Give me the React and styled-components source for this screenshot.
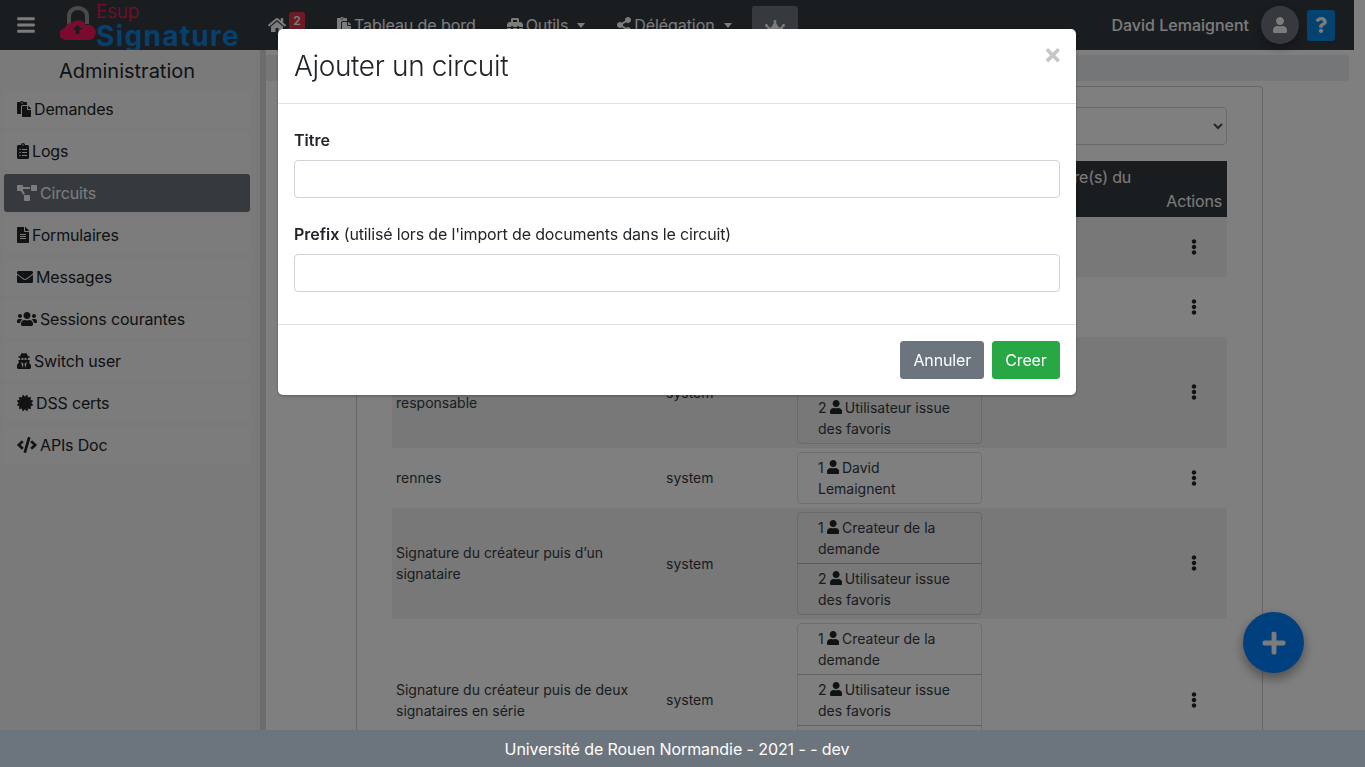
import styled, { createGlobalStyle } from "styled-components";
import {
  FaBars,
  FaCertificate,
  FaClipboardList,
  FaCode,
  FaCrown,
  FaEllipsisV,
  FaEnvelope,
  FaFileAlt,
  FaHome,
  FaPaste,
  FaPlus,
  FaProjectDiagram,
  FaQuestion,
  FaShareAlt,
  FaToolbox,
  FaUser,
  FaUsers,
  FaUserSecret,
} from "react-icons/fa";

const GlobalStyle = createGlobalStyle`
  * {
    box-sizing: border-box;
  }
  html, body {
    margin: 0;
    height: 100%;
    overflow: hidden;
  }
  body {
    font-family: Inter, "Liberation Sans", sans-serif;
    font-size: 16px;
    line-height: 1.5;
    letter-spacing: -0.01em;
    color: #212529;
    background: #fff;
  }
`;

const Page = styled.div`
  height: 100vh;
  display: flex;
  flex-direction: column;
`;

const Shell = styled.div`
  flex: 1 1 0;
  min-height: 0;
  padding-right: 11px;
  display: flex;
  flex-direction: column;
  overflow: hidden;
`;

const Navbar = styled.nav`
  flex: 0 0 50px;
  background: #343a40;
  display: flex;
  align-items: center;
  padding-left: 17px;
  padding-right: 19px;
  color: #f8f9fa;
`;

const MenuIcon = styled(FaBars)`
  width: 18px;
  height: 20px;
  color: #f8f9fa;
  margin-right: 25px;
`;

const Logo = styled.div`
  width: 208px;
  height: 50px;
  display: flex;
  align-items: flex-start;
  flex: none;
`;

const LogoMark = styled.svg`
  width: 36px;
  height: 50px;
  flex: none;
`;

const LogoText = styled.div`
  display: flex;
  flex-direction: column;
  font-size: 19px;
  line-height: 18px;
  padding-top: 3px;
`;

const LogoEsup = styled.span`
  font-weight: 300;
  color: #f4165f;
`;

const LogoName = styled.span`
  margin-top: -1px;
  font-size: 28px;
  line-height: 32px;
  font-weight: 700;
  letter-spacing: 1.3px;
  color: #0f80d8;
`;

const NavLink = styled.div`
  display: flex;
  align-items: center;
  gap: 3px;
  margin-left: ${(p) => p.$ml || 0}px;
  white-space: nowrap;
  letter-spacing: -0.005em;

  svg {
    flex: none;
    width: ${(p) => p.$iconWidth}px;
  }
`;

const HomeBadge = styled.span`
  width: 16px;
  height: 21px;
  margin-top: -5px;
  border-radius: 3px;
  background: #dc3545;
  color: #f8f9fa;
  font-size: 12px;
  font-weight: 600;
  text-align: center;
`;

const Caret = styled.span`
  width: 0;
  height: 0;
  margin-left: 6px;
  border-top: 5px solid #f8f9fa;
  border-left: 4.5px solid transparent;
  border-right: 4.5px solid transparent;
`;

const CrownButton = styled.div`
  width: 46px;
  height: 44px;
  margin-top: 6px;
  margin-left: 20px;
  background: #6c757d;
  border-radius: 3px 3px 0 0;
  display: flex;
  align-items: center;
  justify-content: center;

  svg {
    width: 20px;
    height: 16px;
  }
`;

const UserZone = styled.div`
  margin-left: auto;
  display: flex;
  align-items: center;
`;

const UserName = styled.span`
  font-weight: 500;
  letter-spacing: 0;
  margin-right: 12px;
`;

const Avatar = styled.div`
  width: 38px;
  height: 38px;
  border-radius: 50%;
  background: #6c757d;
  box-shadow: 0 4px 10px rgba(0, 0, 0, 0.3);
  display: flex;
  align-items: center;
  justify-content: center;
  margin-right: 8px;

  svg {
    width: 14px;
    height: 16px;
  }
`;

const HelpButton = styled.div`
  width: 28px;
  height: 31px;
  border-radius: 3px;
  background: #0884de;
  display: flex;
  align-items: center;
  justify-content: center;

  svg {
    width: 12px;
    height: 16px;
  }
`;

const Body = styled.div`
  flex: 1 1 0;
  min-height: 0;
  display: flex;
`;

const Sidebar = styled.aside`
  flex: 0 0 266px;
  background: #f4f5f6;
  border-right: 6px solid #d8d8d8;
  padding: 6px 10px 0 4px;
  display: flex;
  flex-direction: column;
  gap: 4px;
`;

const SidebarTitle = styled.div`
  font-size: 20px;
  line-height: 30px;
  letter-spacing: 0;
  text-align: center;
`;

const SideItem = styled.div`
  height: 38px;
  padding-left: 13px;
  display: flex;
  align-items: center;
  gap: 3px;
  border-radius: 3px;
  background: ${(p) => (p.$active ? "#6c757d" : "#f8f9fa")};
  color: ${(p) => (p.$active ? "#f8f9fa" : "#212529")};

  svg {
    width: ${(p) => p.$iconWidth}px;
  }
`;

const Main = styled.main`
  flex: 1 1 0;
  min-width: 0;
  padding: 5px 5px 0 0;
`;

const Breadcrumb = styled.div`
  height: 26px;
  background: #e9ecef;
  border-radius: 3px;
`;

const Card = styled.section`
  margin: 5px 86px 0 90px;
  padding: 20px 35px 0;
  border: 1px solid rgba(0, 0, 0, 0.2);
  border-radius: 4px;
  background: #fff;
`;

const Filter = styled.select`
  display: block;
  width: 100%;
  height: 38px;
  margin-bottom: 16px;
  background: #fff;
  border: 1px solid #ced4da;
  border-radius: 4px;
  font: inherit;
  color: #495057;
`;

const Table = styled.table`
  width: 835px;
  table-layout: fixed;
  border-collapse: collapse;
`;

const Th = styled.th`
  width: ${(p) => p.$w}px;
  padding: 4px;
  padding-left: ${(p) => p.$indent || 4}px;
  padding-right: ${(p) => (p.$right ? 5 : 4)}px;
  font-weight: 400;
  vertical-align: bottom;
  text-align: ${(p) => (p.$right ? "right" : "left")};
  color: #f8f9fa;
  background: #343a40;
`;

const Row = styled.tr`
  background: ${(p) => (p.$striped ? "rgba(0, 0, 0, 0.06)" : "transparent")};
`;

const Td = styled.td`
  padding: 4px 4px 5px;
  font-size: 14px;
  line-height: 21px;
  letter-spacing: 0;
  color: #343a40;
  vertical-align: middle;
  text-align: ${(p) => (p.$center ? "center" : "left")};
`;

const StepsCell = styled(Td)`
  padding: 4px;
`;

const Steps = styled.ul`
  margin: 0;
  padding: 0;
  list-style: none;
`;

const Step = styled.li`
  padding: 4px 28px 4px 20px;
  border: 1px solid rgba(0, 0, 0, 0.125);
  margin-top: -1px;
  background: transparent;

  &:first-child {
    margin-top: 0;
    border-radius: 4px 4px 0 0;
  }
  &:last-child {
    border-bottom-left-radius: 4px;
    border-bottom-right-radius: 4px;
  }
  &:only-child {
    border-radius: 4px;
  }

  svg {
    width: 12.25px;
    margin: 0 3px;
    vertical-align: -1px;
    color: #212529;
  }
`;

const Dots = styled(FaEllipsisV)`
  font-size: 16px;
  display: block;
  margin: 0 auto;
  color: #212529;
`;

const Fab = styled.div`
  position: fixed;
  left: 1243px;
  top: 612px;
  width: 61px;
  height: 61px;
  border-radius: 50%;
  background: #0080ff;
  color: #f8f9fa;
  box-shadow: 0 5px 12px rgba(0, 0, 0, 0.4);
  display: flex;
  align-items: center;
  justify-content: center;
  font-size: 26px;
`;

const Footer = styled.footer`
  position: relative;
  z-index: 15;
  flex: 0 0 37px;
  min-height: 0;
  overflow: hidden;
  padding-right: 11px;
  background: #6c757d;
  color: #fff;
  text-align: center;
  line-height: 38px;
  letter-spacing: -0.005em;
`;

const Backdrop = styled.div`
  position: fixed;
  inset: 0;
  z-index: 10;
  background: rgba(0, 0, 0, 0.5);
`;

const Modal = styled.div`
  position: fixed;
  z-index: 20;
  top: 29px;
  left: 278px;
  width: 798px;
  background: #fff;
  border-radius: 5px;
  box-shadow: 0 1px 3px rgba(0, 0, 0, 0.3);
`;

const ModalHeader = styled.header`
  height: 75px;
  padding: 16px;
  border-bottom: 1px solid #dee2e6;
  display: flex;
  justify-content: space-between;
`;

const ModalTitle = styled.h5`
  margin: 0;
  font-size: 28px;
  line-height: 42px;
  font-weight: 300;
  letter-spacing: -0.0125em;
`;

const CloseButton = styled.span`
  font-size: 28px;
  line-height: 20px;
  font-weight: 700;
  color: #c6c6c6;
  margin-top: -1px;
  margin-right: -2px;
`;

const ModalBody = styled.div`
  padding: 24px 16px 32px;
  display: flex;
  flex-direction: column;
  gap: 24px;
`;

const Field = styled.div`
  display: flex;
  flex-direction: column;
  gap: 8px;
`;

const Label = styled.label`
  display: block;
`;

const LabelName = styled.span`
  font-weight: 600;
  letter-spacing: 0;
`;

const TextInput = styled.input`
  height: 38px;
  width: 100%;
  padding: 6px 12px;
  border: 1px solid #ced4da;
  border-radius: 4px;
  background: #fff;
  font: inherit;
`;

const ModalFooter = styled.div`
  padding: 16px;
  border-top: 1px solid #dee2e6;
  display: flex;
  justify-content: flex-end;
  gap: 8px;
`;

const Button = styled.button`
  height: 38px;
  min-width: 68px;
  padding: 0 12px;
  border: 1px solid ${(p) => p.$color};
  border-radius: 3px;
  background: ${(p) => p.$color};
  color: #fff;
  font: inherit;
  letter-spacing: inherit;
`;

const sideItems = [
  { icon: <FaPaste />, width: 14, label: "Demandes" },
  { icon: <FaClipboardList />, width: 12, label: "Logs" },
  { icon: <FaProjectDiagram />, width: 20, label: "Circuits", active: true },
  { icon: <FaFileAlt />, width: 12, label: "Formulaires" },
  { icon: <FaEnvelope />, width: 16, label: "Messages" },
  { icon: <FaUsers />, width: 20, label: "Sessions courantes" },
  { icon: <FaUserSecret />, width: 14, label: "Switch user" },
  { icon: <FaCertificate />, width: 16, label: "DSS certs" },
  { icon: <FaCode />, width: 20, label: "APIs Doc" },
];

const creator = "Createur de la demande";
const favorite = "Utilisateur issue des favoris";

const circuits = [
  { title: "Visa", steps: ["David Lemaignent"] },
  { title: "Signature", steps: ["David Lemaignent"] },
  { title: "Visa du créateur puis signature du responsable", steps: [creator, favorite] },
  { title: "rennes", steps: ["David Lemaignent"] },
  { title: "Signature du créateur puis d’un signataire", steps: [creator, favorite] },
  {
    title: "Signature du créateur puis de deux signataires en série",
    steps: [creator, favorite, favorite],
  },
];

const App = () => {
  return (
    <Page>
      <GlobalStyle />
      <Shell>
        <Navbar>
          <MenuIcon />
          <Logo>
            <LogoMark viewBox="0 0 36 50">
              <path
                d="M9 24V16a9 8 0 0 1 18 0v8"
                fill="none"
                stroke="#949494"
                strokeWidth="4"
              />
              <path
                d="M6 40a6 6 0 0 1-1-12 7 7 0 0 1 7-5 8.5 8.5 0 0 1 14 2 7.500 7.500 0 0 1 4 15z"
                fill="#f4165f"
              />
              <path d="M17.500 25l5 4.500h-3V34h-4v-4.500h-3z" fill="#343a40" />
            </LogoMark>
            <LogoText>
              <LogoEsup>Esup</LogoEsup>
              <LogoName>Signature</LogoName>
            </LogoText>
          </Logo>
          <NavLink $iconWidth={18}>
            <FaHome />
            <HomeBadge>2</HomeBadge>
          </NavLink>
          <NavLink $ml={32} $iconWidth={14}>
            <FaPaste />
            Tableau de bord
          </NavLink>
          <NavLink $ml={31} $iconWidth={16}>
            <FaToolbox />
            Outils
            <Caret />
          </NavLink>
          <NavLink $ml={32} $iconWidth={14}>
            <FaShareAlt />
            Délégation
            <Caret />
          </NavLink>
          <CrownButton>
            <FaCrown />
          </CrownButton>
          <UserZone>
            <UserName>David Lemaignent</UserName>
            <Avatar>
              <FaUser />
            </Avatar>
            <HelpButton>
              <FaQuestion />
            </HelpButton>
          </UserZone>
        </Navbar>
        <Body>
          <Sidebar>
            <SidebarTitle>Administration</SidebarTitle>
            {sideItems.map((item) => (
              <SideItem key={item.label} $active={item.active} $iconWidth={item.width}>
                {item.icon}
                {item.label}
              </SideItem>
            ))}
          </Sidebar>
          <Main>
            <Breadcrumb />
            <Card>
              <Filter defaultValue="all">
                <option value="all">Tous les circuits</option>
              </Filter>
              <Table>
                <thead>
                  <tr>
                    <Th $w={270}>Titre</Th>
                    <Th $w={131}>Créateur</Th>
                    <Th $w={193}>Étapes</Th>
                    <Th $w={175} $indent={14}>
                      Destinataire(s) du suivi
                    </Th>
                    <Th $w={66} $right>
                      Actions
                    </Th>
                  </tr>
                </thead>
                <tbody>
                  {circuits.map((circuit, index) => (
                    <Row key={circuit.title} $striped={index % 2 === 0}>
                      <Td>{circuit.title}</Td>
                      <Td>system</Td>
                      <StepsCell>
                        <Steps>
                          {circuit.steps.map((step, stepIndex) => (
                            <Step key={stepIndex}>
                              {stepIndex + 1}
                              <FaUser />
                              {step}
                            </Step>
                          ))}
                        </Steps>
                      </StepsCell>
                      <Td />
                      <Td $center>
                        <Dots />
                      </Td>
                    </Row>
                  ))}
                </tbody>
              </Table>
            </Card>
          </Main>
        </Body>
      </Shell>
      <Fab>
        <FaPlus />
      </Fab>
      <Footer>Université de Rouen Normandie - 2021 - - dev</Footer>
      <Backdrop />
      <Modal>
        <ModalHeader>
          <ModalTitle>Ajouter un circuit</ModalTitle>
          <CloseButton>×</CloseButton>
        </ModalHeader>
        <ModalBody>
          <Field>
            <Label>
              <LabelName>Titre</LabelName>
            </Label>
            <TextInput />
          </Field>
          <Field>
            <Label>
              <LabelName>Prefix</LabelName> (utilisé lors de l'import de documents dans le circuit)
            </Label>
            <TextInput />
          </Field>
        </ModalBody>
        <ModalFooter>
          <Button $color="#6c757d">Annuler</Button>
          <Button $color="#28a745">Creer</Button>
        </ModalFooter>
      </Modal>
    </Page>
  );
};

export default App;
